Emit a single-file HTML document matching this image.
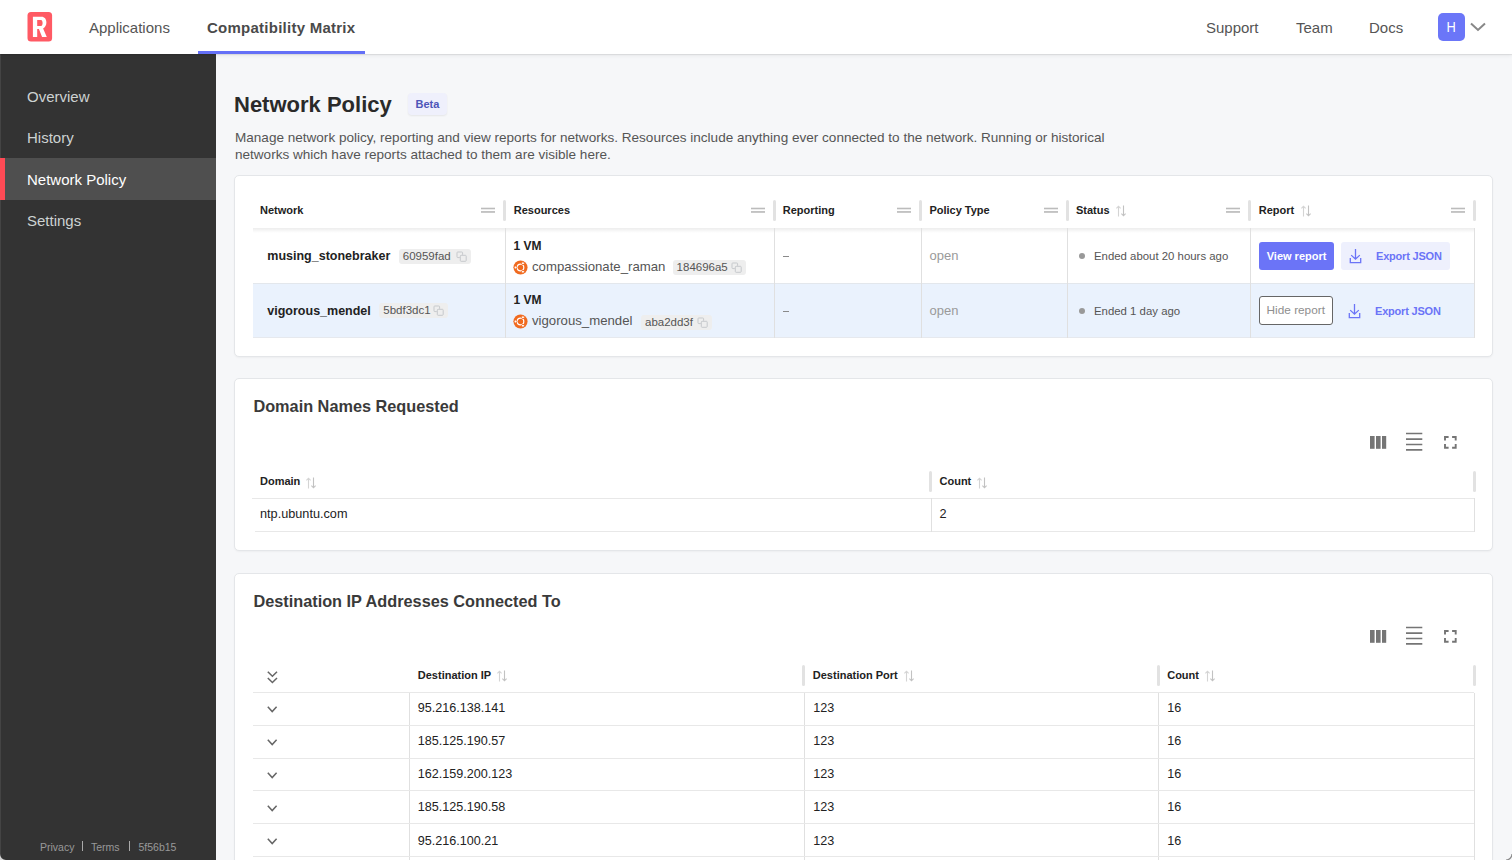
<!DOCTYPE html>
<html><head><meta charset="utf-8">
<style>
*{box-sizing:border-box;margin:0;padding:0}
html,body{width:1512px;height:860px;overflow:hidden;background:#f6f7f9;font-family:"Liberation Sans",sans-serif;color:#222}
.abs{position:absolute}
.t{position:absolute;white-space:nowrap;line-height:1}
#hdr{position:absolute;left:0;top:0;width:1512px;height:54px;background:#fff;box-shadow:0 1px 1px rgba(0,0,0,.08),0 2px 4px rgba(0,0,0,.05);z-index:3}
#side{position:absolute;left:0;top:54px;width:216px;height:806px;background:#333;z-index:2}
.card{position:absolute;left:234px;width:1259px;background:#fff;border:1px solid #e4e6e9;border-radius:5px;box-shadow:0 1px 2px rgba(0,0,0,.04)}
.hsep{position:absolute;width:3px;height:21px;background:#e2e2e2;border-radius:2px}
.hdl{position:absolute;width:14px;height:5px;border-top:1.5px solid #bdbdbd;border-bottom:1.5px solid #bdbdbd}
.vl{position:absolute;width:1px;background:#e2e2e2}
.hl{position:absolute;height:1px;background:#e8e8e8}
.th{font-size:11px;font-weight:700;color:#222}
.sort{position:absolute;width:11px;height:12px}
</style></head>
<body>
<!-- HEADER -->
<div id="hdr">
  <svg class="abs" style="left:0;top:0" width="60" height="54" viewBox="0 0 60 54"><rect x="27.5" y="12" width="24.6" height="29.5" rx="3.5" fill="#ff5a64"/><path fill="#fff" fill-rule="evenodd" d="M32.9 16.8H41.5C44.5 16.8 46.4 19 46.4 22.6C46.4 25.3 45.1 27.4 43.1 28.5L46.8 36.9H42.1L38.9 29H37.2V36.9H32.9ZM37.2 20V25.9H41C42.2 25.9 42.6 24.4 42.6 23C42.6 21.5 42 20 41 20Z"/></svg>
  
  <div class="t" style="left:89px;top:20px;font-size:15px;color:#555">Applications</div>
  <div class="t" style="left:207px;top:20px;font-size:15px;font-weight:700;color:#4a4a4a;letter-spacing:.25px">Compatibility Matrix</div>
  <div class="abs" style="left:198px;top:51px;width:167px;height:3px;background:#6470f7"></div>
  <div class="t" style="left:1206px;top:20px;font-size:15px;color:#555">Support</div>
  <div class="t" style="left:1296px;top:20px;font-size:15px;color:#555">Team</div>
  <div class="t" style="left:1369px;top:20px;font-size:15px;color:#555">Docs</div>
  <div class="abs" style="left:1438px;top:13.4px;width:27px;height:27.3px;background:#6b76f8;border-radius:5px"></div>
  <div class="t" style="left:1446.2px;top:19.7px;font-size:14px;color:#fff;transform:scaleX(.92)">H</div>
  <svg class="abs" style="left:1469px;top:21px" width="18" height="12" viewBox="0 0 18 12"><path d="M2 2.5 L9 9 L16 2.5" fill="none" stroke="#888" stroke-width="2"/></svg>
</div>

<!-- SIDEBAR -->
<div id="side">
  <div class="abs" style="left:0;top:0;width:1px;height:806px;background:#444"></div>
  <div class="abs" style="left:0;top:104.2px;width:216px;height:41.7px;background:#4f4f4f"></div>
  <div class="abs" style="left:0;top:104.2px;width:5px;height:41.7px;background:#ff4a55"></div>
  <div class="t" style="left:27px;top:34.5px;font-size:15px;color:#cdd2d2">Overview</div>
  <div class="t" style="left:27px;top:76px;font-size:15px;color:#cdd2d2">History</div>
  <div class="t" style="left:27px;top:117.5px;font-size:15px;color:#fff">Network Policy</div>
  <div class="t" style="left:27px;top:159px;font-size:15px;color:#cdd2d2">Settings</div>
  <div class="t" style="left:40px;top:787.8px;font-size:10.5px;color:#999">Privacy</div>
  <div class="abs" style="left:82px;top:787px;width:1px;height:10px;background:#aaa"></div>
  <div class="t" style="left:91px;top:787.8px;font-size:10.5px;color:#999">Terms</div>
  <div class="abs" style="left:129px;top:787px;width:1px;height:10px;background:#aaa"></div>
  <div class="t" style="left:138.5px;top:787.8px;font-size:10.5px;color:#999">5f56b15</div>
</div>

<!-- TITLE -->
<div class="t" style="left:234px;top:94px;font-size:22px;font-weight:700;color:#2a2a2a">Network Policy</div>
<div class="abs" style="left:407.8px;top:93.3px;width:38.8px;height:21.7px;background:#eff0fc;border-radius:4px;box-shadow:0 1px 2px rgba(0,0,0,.07)"></div>
<div class="t" style="left:415.5px;top:99px;font-size:11px;font-weight:700;color:#4d55b8">Beta</div>
<div class="abs" style="left:235px;top:129.2px;width:900px;font-size:13.55px;line-height:17.2px;color:#555">Manage network policy, reporting and view reports for networks. Resources include anything ever connected to the network. Running or historical networks which have reports attached to them are visible here.</div>

<!-- CARD 1 -->
<div class="abs" style="left:234px;top:175px;width:1259px;height:181.5px;background:#fff;border:1px solid #e4e6e9;border-radius:5px;box-shadow:0 1px 2px rgba(0,0,0,.04)"></div>
<div class="abs" style="left:253px;top:283px;width:1221px;height:54.5px;background:#eaf2fd"></div>
<div class="abs" style="left:253px;top:228px;width:1221px;height:5px;background:linear-gradient(rgba(0,0,0,.07),rgba(0,0,0,0))"></div>
<div class="abs" style="left:253px;top:283px;width:1221px;height:1px;background:#e3e7ec"></div>
<div class="abs" style="left:253px;top:337px;width:1221px;height:1px;background:#e6e9ee"></div>
<div class="abs" style="left:505px;top:228px;width:1px;height:110px;background:#e0e0e0"></div>
<div class="abs" style="left:774px;top:228px;width:1px;height:110px;background:#e0e0e0"></div>
<div class="abs" style="left:920.5px;top:228px;width:1px;height:110px;background:#e0e0e0"></div>
<div class="abs" style="left:1067px;top:228px;width:1px;height:110px;background:#e0e0e0"></div>
<div class="abs" style="left:1250px;top:228px;width:1px;height:110px;background:#e0e0e0"></div>
<div class="abs" style="left:1474px;top:228px;width:1px;height:110px;background:#e0e0e0"></div>
<div class="t" style="left:260px;top:204.69px;font-size:11px;font-weight:700;color:#222;">Network</div>
<div class="abs" style="left:503px;top:199.5px;width:3px;height:21px;background:#e2e2e2;border-radius:2px"></div>
<svg class="abs" style="left:481px;top:206px" width="14" height="9" viewBox="0 0 14 9"><rect x="0" y="1.7" width="14" height="1.6" fill="#bcbcbc"/><rect x="0" y="5.1" width="14" height="1.7" fill="#bcbcbc"/></svg>
<div class="t" style="left:513.75px;top:204.69px;font-size:11px;font-weight:700;color:#222;">Resources</div>
<div class="abs" style="left:772.5px;top:199.5px;width:3px;height:21px;background:#e2e2e2;border-radius:2px"></div>
<svg class="abs" style="left:750.5px;top:206px" width="14" height="9" viewBox="0 0 14 9"><rect x="0" y="1.7" width="14" height="1.6" fill="#bcbcbc"/><rect x="0" y="5.1" width="14" height="1.7" fill="#bcbcbc"/></svg>
<div class="t" style="left:782.7px;top:204.69px;font-size:11px;font-weight:700;color:#222;">Reporting</div>
<div class="abs" style="left:919px;top:199.5px;width:3px;height:21px;background:#e2e2e2;border-radius:2px"></div>
<svg class="abs" style="left:897px;top:206px" width="14" height="9" viewBox="0 0 14 9"><rect x="0" y="1.7" width="14" height="1.6" fill="#bcbcbc"/><rect x="0" y="5.1" width="14" height="1.7" fill="#bcbcbc"/></svg>
<div class="t" style="left:929.4px;top:204.69px;font-size:11px;font-weight:700;color:#222;">Policy Type</div>
<div class="abs" style="left:1065.8px;top:199.5px;width:3px;height:21px;background:#e2e2e2;border-radius:2px"></div>
<svg class="abs" style="left:1043.8px;top:206px" width="14" height="9" viewBox="0 0 14 9"><rect x="0" y="1.7" width="14" height="1.6" fill="#bcbcbc"/><rect x="0" y="5.1" width="14" height="1.7" fill="#bcbcbc"/></svg>
<div class="t" style="left:1075.9px;top:204.69px;font-size:11px;font-weight:700;color:#222;">Status</div>
<div class="abs" style="left:1248px;top:199.5px;width:3px;height:21px;background:#e2e2e2;border-radius:2px"></div>
<svg class="abs" style="left:1226px;top:206px" width="14" height="9" viewBox="0 0 14 9"><rect x="0" y="1.7" width="14" height="1.6" fill="#bcbcbc"/><rect x="0" y="5.1" width="14" height="1.7" fill="#bcbcbc"/></svg>
<div class="t" style="left:1258.8px;top:204.69px;font-size:11px;font-weight:700;color:#222;">Report</div>
<div class="abs" style="left:1472.5px;top:199.5px;width:3px;height:21px;background:#e2e2e2;border-radius:2px"></div>
<svg class="abs" style="left:1450.5px;top:206px" width="14" height="9" viewBox="0 0 14 9"><rect x="0" y="1.7" width="14" height="1.6" fill="#bcbcbc"/><rect x="0" y="5.1" width="14" height="1.7" fill="#bcbcbc"/></svg>
<svg class="abs" style="left:1115.5px;top:205px" width="11" height="12" viewBox="0 0 11 12"><path d="M2.5 11.5V1.2M0.4 3.3L2.5 1.2L4.6 3.3" stroke="#d4d4d4" stroke-width="1.1" fill="none"/><path d="M7.5 0.5V10.8M5.4 8.7L7.5 10.8L9.6 8.7" stroke="#c2c2c2" stroke-width="1.1" fill="none"/></svg>
<svg class="abs" style="left:1300.7px;top:205px" width="11" height="12" viewBox="0 0 11 12"><path d="M2.5 11.5V1.2M0.4 3.3L2.5 1.2L4.6 3.3" stroke="#d4d4d4" stroke-width="1.1" fill="none"/><path d="M7.5 0.5V10.8M5.4 8.7L7.5 10.8L9.6 8.7" stroke="#c2c2c2" stroke-width="1.1" fill="none"/></svg>
<div class="t" style="left:267.3px;top:250.02px;font-size:12.5px;font-weight:700;color:#222;">musing_stonebraker</div>
<div class="abs" style="left:398.75px;top:248.5px;width:71.75px;height:15px;background:#eeeeee;border-radius:3px"></div>
<div class="t" style="left:402.75px;top:250.87px;font-size:11.5px;color:#555;">60959fad</div>
<svg class="abs" style="left:456.0px;top:250.5px" width="11" height="11" viewBox="0 0 11 11"><path d="M3.8 6.6H1.8A0.8 0.8 0 0 1 1 5.8V1.8A0.8 0.8 0 0 1 1.8 1H5.8A0.8 0.8 0 0 1 6.6 1.8V3.8" stroke="#c6c9cc" stroke-width="1" fill="none"/><rect x="4.3" y="4.3" width="5.9" height="6" rx="0.8" stroke="#c6c9cc" stroke-width="1" fill="none"/></svg>
<div class="t" style="left:513.5px;top:239.64px;font-size:12px;font-weight:700;color:#222;">1 VM</div>
<svg class="abs" style="left:513.1px;top:259.6px" width="15" height="15" viewBox="0 0 15 15"><circle cx="7.5" cy="7.5" r="7.05" fill="#f06a1f"/><circle cx="7.5" cy="7.5" r="3.3" fill="none" stroke="#fff" stroke-width="1.2"/><g fill="#fff" stroke="#f06a1f" stroke-width="0.9"><circle cx="2.6" cy="7.5" r="1.45"/><circle cx="9.95" cy="3.26" r="1.45"/><circle cx="9.95" cy="11.74" r="1.45"/></g></svg>
<div class="t" style="left:532px;top:259.93px;font-size:13.2px;color:#555;">compassionate_raman</div>
<div class="abs" style="left:672.6px;top:260.2px;width:73.10000000000002px;height:15px;background:#eeeeee;border-radius:3px"></div>
<div class="t" style="left:676.6px;top:262.07px;font-size:11.5px;color:#555;">184696a5</div>
<svg class="abs" style="left:731.2px;top:262.2px" width="11" height="11" viewBox="0 0 11 11"><path d="M3.8 6.6H1.8A0.8 0.8 0 0 1 1 5.8V1.8A0.8 0.8 0 0 1 1.8 1H5.8A0.8 0.8 0 0 1 6.6 1.8V3.8" stroke="#c6c9cc" stroke-width="1" fill="none"/><rect x="4.3" y="4.3" width="5.9" height="6" rx="0.8" stroke="#c6c9cc" stroke-width="1" fill="none"/></svg>
<div class="abs" style="left:782.7px;top:256px;width:6.3px;height:1.1px;background:#8a8a8a"></div>
<div class="t" style="left:929.5px;top:248.70px;font-size:13px;color:#9a9a9a;">open</div>
<div class="abs" style="left:1078.8px;top:253.3px;width:6px;height:6px;background:#999;border-radius:50%"></div>
<div class="t" style="left:1094px;top:250.75px;font-size:11.4px;color:#555;">Ended about 20 hours ago</div>
<div class="abs" style="left:1259px;top:242px;width:75px;height:28.4px;background:#6b74f7;border-radius:3px"></div>
<div class="t" style="left:1266.7px;top:251.29px;font-size:11px;font-weight:700;color:#fff;">View report</div>
<div class="abs" style="left:1341px;top:242px;width:108.5px;height:28.4px;background:#eef0fd;border-radius:3px"></div>
<svg class="abs" style="left:1349.2px;top:248px" width="13" height="16" viewBox="0 0 13 16"><path d="M6.5 1V11.2M2.2 7.1L6.5 11.2L10.8 7.1M1.3 10V14.6H11.7V10" stroke="#6b74f7" stroke-width="1.3" fill="none"/></svg>
<div class="t" style="left:1376px;top:251.29px;font-size:11px;font-weight:700;color:#6b74f7;letter-spacing:-.2px">Export JSON</div>
<div class="t" style="left:267.3px;top:304.52px;font-size:12.5px;font-weight:700;color:#222;">vigorous_mendel</div>
<div class="abs" style="left:379.3px;top:303.0px;width:68.39999999999998px;height:15px;background:#eeeeee;border-radius:3px"></div>
<div class="t" style="left:383.3px;top:305.37px;font-size:11.5px;color:#555;">5bdf3dc1</div>
<svg class="abs" style="left:433.2px;top:305.0px" width="11" height="11" viewBox="0 0 11 11"><path d="M3.8 6.6H1.8A0.8 0.8 0 0 1 1 5.8V1.8A0.8 0.8 0 0 1 1.8 1H5.8A0.8 0.8 0 0 1 6.6 1.8V3.8" stroke="#c6c9cc" stroke-width="1" fill="none"/><rect x="4.3" y="4.3" width="5.9" height="6" rx="0.8" stroke="#c6c9cc" stroke-width="1" fill="none"/></svg>
<div class="t" style="left:513.5px;top:294.14px;font-size:12px;font-weight:700;color:#222;">1 VM</div>
<svg class="abs" style="left:513.1px;top:314.1px" width="15" height="15" viewBox="0 0 15 15"><circle cx="7.5" cy="7.5" r="7.05" fill="#f06a1f"/><circle cx="7.5" cy="7.5" r="3.3" fill="none" stroke="#fff" stroke-width="1.2"/><g fill="#fff" stroke="#f06a1f" stroke-width="0.9"><circle cx="2.6" cy="7.5" r="1.45"/><circle cx="9.95" cy="3.26" r="1.45"/><circle cx="9.95" cy="11.74" r="1.45"/></g></svg>
<div class="t" style="left:532px;top:314.43px;font-size:13.2px;color:#555;">vigorous_mendel</div>
<div class="abs" style="left:641px;top:314.7px;width:70.79999999999995px;height:15px;background:#eeeeee;border-radius:3px"></div>
<div class="t" style="left:645px;top:316.57px;font-size:11.5px;color:#555;">aba2dd3f</div>
<svg class="abs" style="left:697.3px;top:316.7px" width="11" height="11" viewBox="0 0 11 11"><path d="M3.8 6.6H1.8A0.8 0.8 0 0 1 1 5.8V1.8A0.8 0.8 0 0 1 1.8 1H5.8A0.8 0.8 0 0 1 6.6 1.8V3.8" stroke="#c6c9cc" stroke-width="1" fill="none"/><rect x="4.3" y="4.3" width="5.9" height="6" rx="0.8" stroke="#c6c9cc" stroke-width="1" fill="none"/></svg>
<div class="abs" style="left:782.7px;top:310.5px;width:6.3px;height:1.1px;background:#8a8a8a"></div>
<div class="t" style="left:929.5px;top:303.85px;font-size:13px;color:#9a9a9a;">open</div>
<div class="abs" style="left:1078.8px;top:307.8px;width:6px;height:6px;background:#999;border-radius:50%"></div>
<div class="t" style="left:1094px;top:306.07px;font-size:11.4px;color:#555;">Ended 1 day ago</div>
<div class="abs" style="left:1259.3px;top:296.2px;width:73.7px;height:28.4px;background:#fff;border:1px solid #666;border-radius:3px"></div>
<div class="t" style="left:1266.6px;top:305.21px;font-size:11.8px;color:#8e8e8e;">Hide report</div>
<svg class="abs" style="left:1348.2px;top:302.5px" width="13" height="16" viewBox="0 0 13 16"><path d="M6.5 1V11.2M2.2 7.1L6.5 11.2L10.8 7.1M1.3 10V14.6H11.7V10" stroke="#6b74f7" stroke-width="1.3" fill="none"/></svg>
<div class="t" style="left:1375px;top:305.79px;font-size:11px;font-weight:700;color:#6b74f7;letter-spacing:-.2px">Export JSON</div>
<!-- CARD 2 -->
<div class="abs" style="left:234px;top:378px;width:1259px;height:172.5px;background:#fff;border:1px solid #e4e6e9;border-radius:5px;box-shadow:0 1px 2px rgba(0,0,0,.04)"></div>
<div class="t" style="left:253.4px;top:398.30px;font-size:16.3px;font-weight:700;color:#3a3a3a;">Domain Names Requested</div>
<svg class="abs" style="left:1370px;top:436px" width="17" height="13" viewBox="0 0 17 13" overflow="visible"><rect x="0" y="0" width="4.6" height="12.8" fill="#757575"/><rect x="6" y="0" width="4.6" height="12.8" fill="#757575"/><rect x="12" y="0" width="4.2" height="12.8" fill="#757575"/></svg>
<svg class="abs" style="left:1406px;top:432.15px" width="17" height="19" viewBox="0 0 17 19"><path d="M0 1.5H16.3M0 7.1H16.3M0 12.5H16.3M0 17.9H16.3" stroke="#757575" stroke-width="1.6"/></svg>
<svg class="abs" style="left:1444px;top:436px" width="13" height="13" viewBox="0 0 13 13"><path d="M1 4.6V1H4.6M8.1 1H11.7V4.6M11.7 8.1V11.7H8.1M4.6 11.7H1V8.1" stroke="#757575" stroke-width="1.9" fill="none"/></svg>
<div class="t" style="left:260px;top:476.29px;font-size:11px;font-weight:700;color:#222;">Domain</div>
<svg class="abs" style="left:306px;top:476.5px" width="11" height="12" viewBox="0 0 11 12"><path d="M2.5 11.5V1.2M0.4 3.3L2.5 1.2L4.6 3.3" stroke="#d4d4d4" stroke-width="1.1" fill="none"/><path d="M7.5 0.5V10.8M5.4 8.7L7.5 10.8L9.6 8.7" stroke="#c2c2c2" stroke-width="1.1" fill="none"/></svg>
<div class="abs" style="left:929.1px;top:471.2px;width:3px;height:21px;background:#e2e2e2;border-radius:2px"></div>
<div class="t" style="left:939.5px;top:476.29px;font-size:11px;font-weight:700;color:#222;">Count</div>
<svg class="abs" style="left:977.2px;top:476.5px" width="11" height="12" viewBox="0 0 11 12"><path d="M2.5 11.5V1.2M0.4 3.3L2.5 1.2L4.6 3.3" stroke="#d4d4d4" stroke-width="1.1" fill="none"/><path d="M7.5 0.5V10.8M5.4 8.7L7.5 10.8L9.6 8.7" stroke="#c2c2c2" stroke-width="1.1" fill="none"/></svg>
<div class="abs" style="left:1472.5px;top:471.2px;width:3px;height:21px;background:#e2e2e2;border-radius:2px"></div>
<div class="abs" style="left:252px;top:498px;width:1222px;height:1px;background:#e8e8e8"></div>
<div class="abs" style="left:255px;top:531px;width:1219px;height:1px;background:#e8e8e8"></div>
<div class="abs" style="left:930.5px;top:498px;width:1px;height:33.5px;background:#e0e0e0"></div>
<div class="abs" style="left:1474px;top:498px;width:1px;height:33.5px;background:#e0e0e0"></div>
<div class="t" style="left:260px;top:508.45px;font-size:12.7px;color:#222;">ntp.ubuntu.com</div>
<div class="t" style="left:939.5px;top:508.45px;font-size:12.7px;color:#222;">2</div>
<!-- CARD 3 -->
<div class="abs" style="left:234px;top:572.5px;width:1259px;height:300px;background:#fff;border:1px solid #e4e6e9;border-radius:5px;box-shadow:0 1px 2px rgba(0,0,0,.04)"></div>
<div class="t" style="left:253.4px;top:593.20px;font-size:16.3px;font-weight:700;color:#3a3a3a;">Destination IP Addresses Connected To</div>
<svg class="abs" style="left:1370px;top:630px" width="17" height="13" viewBox="0 0 17 13" overflow="visible"><rect x="0" y="0" width="4.6" height="12.8" fill="#757575"/><rect x="6" y="0" width="4.6" height="12.8" fill="#757575"/><rect x="12" y="0" width="4.2" height="12.8" fill="#757575"/></svg>
<svg class="abs" style="left:1406px;top:626.15px" width="17" height="19" viewBox="0 0 17 19"><path d="M0 1.5H16.3M0 7.1H16.3M0 12.5H16.3M0 17.9H16.3" stroke="#757575" stroke-width="1.6"/></svg>
<svg class="abs" style="left:1444px;top:630px" width="13" height="13" viewBox="0 0 13 13"><path d="M1 4.6V1H4.6M8.1 1H11.7V4.6M11.7 8.1V11.7H8.1M4.6 11.7H1V8.1" stroke="#757575" stroke-width="1.9" fill="none"/></svg>
<svg class="abs" style="left:267px;top:670.8px" width="11" height="13" viewBox="0 0 11 13"><path d="M0.8 0.8L5.4 5.3L10 0.8M0.8 7L5.4 11.5L10 7" stroke="#666" stroke-width="1.5" fill="none"/></svg>
<div class="t" style="left:417.8px;top:669.99px;font-size:11px;font-weight:700;color:#222;">Destination IP</div>
<svg class="abs" style="left:496.5px;top:670px" width="11" height="12" viewBox="0 0 11 12"><path d="M2.5 11.5V1.2M0.4 3.3L2.5 1.2L4.6 3.3" stroke="#d4d4d4" stroke-width="1.1" fill="none"/><path d="M7.5 0.5V10.8M5.4 8.7L7.5 10.8L9.6 8.7" stroke="#c2c2c2" stroke-width="1.1" fill="none"/></svg>
<div class="abs" style="left:802.2px;top:664.5px;width:3px;height:21px;background:#e2e2e2;border-radius:2px"></div>
<div class="t" style="left:812.8px;top:669.99px;font-size:11px;font-weight:700;color:#222;">Destination Port</div>
<svg class="abs" style="left:904px;top:670px" width="11" height="12" viewBox="0 0 11 12"><path d="M2.5 11.5V1.2M0.4 3.3L2.5 1.2L4.6 3.3" stroke="#d4d4d4" stroke-width="1.1" fill="none"/><path d="M7.5 0.5V10.8M5.4 8.7L7.5 10.8L9.6 8.7" stroke="#c2c2c2" stroke-width="1.1" fill="none"/></svg>
<div class="abs" style="left:1156.7px;top:664.5px;width:3px;height:21px;background:#e2e2e2;border-radius:2px"></div>
<div class="t" style="left:1167.2px;top:669.99px;font-size:11px;font-weight:700;color:#222;">Count</div>
<svg class="abs" style="left:1205.4px;top:670px" width="11" height="12" viewBox="0 0 11 12"><path d="M2.5 11.5V1.2M0.4 3.3L2.5 1.2L4.6 3.3" stroke="#d4d4d4" stroke-width="1.1" fill="none"/><path d="M7.5 0.5V10.8M5.4 8.7L7.5 10.8L9.6 8.7" stroke="#c2c2c2" stroke-width="1.1" fill="none"/></svg>
<div class="abs" style="left:1472.5px;top:664.5px;width:3px;height:21px;background:#e2e2e2;border-radius:2px"></div>
<div class="abs" style="left:253px;top:692px;width:1221px;height:1px;background:#e8e8e8"></div>
<div class="abs" style="left:409px;top:692.5px;width:1px;height:200px;background:#e0e0e0"></div>
<div class="abs" style="left:804px;top:692.5px;width:1px;height:200px;background:#e0e0e0"></div>
<div class="abs" style="left:1158.3px;top:692.5px;width:1px;height:200px;background:#e0e0e0"></div>
<div class="abs" style="left:1474px;top:692.5px;width:1px;height:200px;background:#e0e0e0"></div>
<div class="abs" style="left:253px;top:725px;width:1221px;height:1px;background:#e8e8e8"></div>
<svg class="abs" style="left:267px;top:705.6px" width="11" height="7" viewBox="0 0 11 7"><path d="M0.8 0.8L5.2 5.6L9.6 0.8" stroke="#666" stroke-width="1.5" fill="none"/></svg>
<div class="t" style="left:417.8px;top:702.33px;font-size:12.6px;color:#222;">95.216.138.141</div>
<div class="t" style="left:813.3px;top:702.33px;font-size:12.6px;color:#222;">123</div>
<div class="t" style="left:1167.2px;top:702.33px;font-size:12.6px;color:#222;">16</div>
<div class="abs" style="left:253px;top:758px;width:1221px;height:1px;background:#e8e8e8"></div>
<svg class="abs" style="left:267px;top:738.5px" width="11" height="7" viewBox="0 0 11 7"><path d="M0.8 0.8L5.2 5.6L9.6 0.8" stroke="#666" stroke-width="1.5" fill="none"/></svg>
<div class="t" style="left:417.8px;top:735.23px;font-size:12.6px;color:#222;">185.125.190.57</div>
<div class="t" style="left:813.3px;top:735.23px;font-size:12.6px;color:#222;">123</div>
<div class="t" style="left:1167.2px;top:735.23px;font-size:12.6px;color:#222;">16</div>
<div class="abs" style="left:253px;top:790px;width:1221px;height:1px;background:#e8e8e8"></div>
<svg class="abs" style="left:267px;top:771.6px" width="11" height="7" viewBox="0 0 11 7"><path d="M0.8 0.8L5.2 5.6L9.6 0.8" stroke="#666" stroke-width="1.5" fill="none"/></svg>
<div class="t" style="left:417.8px;top:768.33px;font-size:12.6px;color:#222;">162.159.200.123</div>
<div class="t" style="left:813.3px;top:768.33px;font-size:12.6px;color:#222;">123</div>
<div class="t" style="left:1167.2px;top:768.33px;font-size:12.6px;color:#222;">16</div>
<div class="abs" style="left:253px;top:823px;width:1221px;height:1px;background:#e8e8e8"></div>
<svg class="abs" style="left:267px;top:804.7px" width="11" height="7" viewBox="0 0 11 7"><path d="M0.8 0.8L5.2 5.6L9.6 0.8" stroke="#666" stroke-width="1.5" fill="none"/></svg>
<div class="t" style="left:417.8px;top:801.43px;font-size:12.6px;color:#222;">185.125.190.58</div>
<div class="t" style="left:813.3px;top:801.43px;font-size:12.6px;color:#222;">123</div>
<div class="t" style="left:1167.2px;top:801.43px;font-size:12.6px;color:#222;">16</div>
<div class="abs" style="left:253px;top:856px;width:1221px;height:1px;background:#e8e8e8"></div>
<svg class="abs" style="left:267px;top:837.8px" width="11" height="7" viewBox="0 0 11 7"><path d="M0.8 0.8L5.2 5.6L9.6 0.8" stroke="#666" stroke-width="1.5" fill="none"/></svg>
<div class="t" style="left:417.8px;top:834.53px;font-size:12.6px;color:#222;">95.216.100.21</div>
<div class="t" style="left:813.3px;top:834.53px;font-size:12.6px;color:#222;">123</div>
<div class="t" style="left:1167.2px;top:834.53px;font-size:12.6px;color:#222;">16</div>
<svg class="abs" style="left:0;top:854px;z-index:5" width="6" height="6" viewBox="0 0 6 6"><path d="M0 0A6 6 0 0 0 6 6H0Z" fill="#d6d6d6"/></svg>
<svg class="abs" style="left:1506px;top:854px;z-index:5" width="6" height="6" viewBox="0 0 6 6"><path d="M6 0A6 6 0 0 1 0 6" fill="none" stroke="#8a8a8a" stroke-width="1.2"/></svg>
</body></html>
